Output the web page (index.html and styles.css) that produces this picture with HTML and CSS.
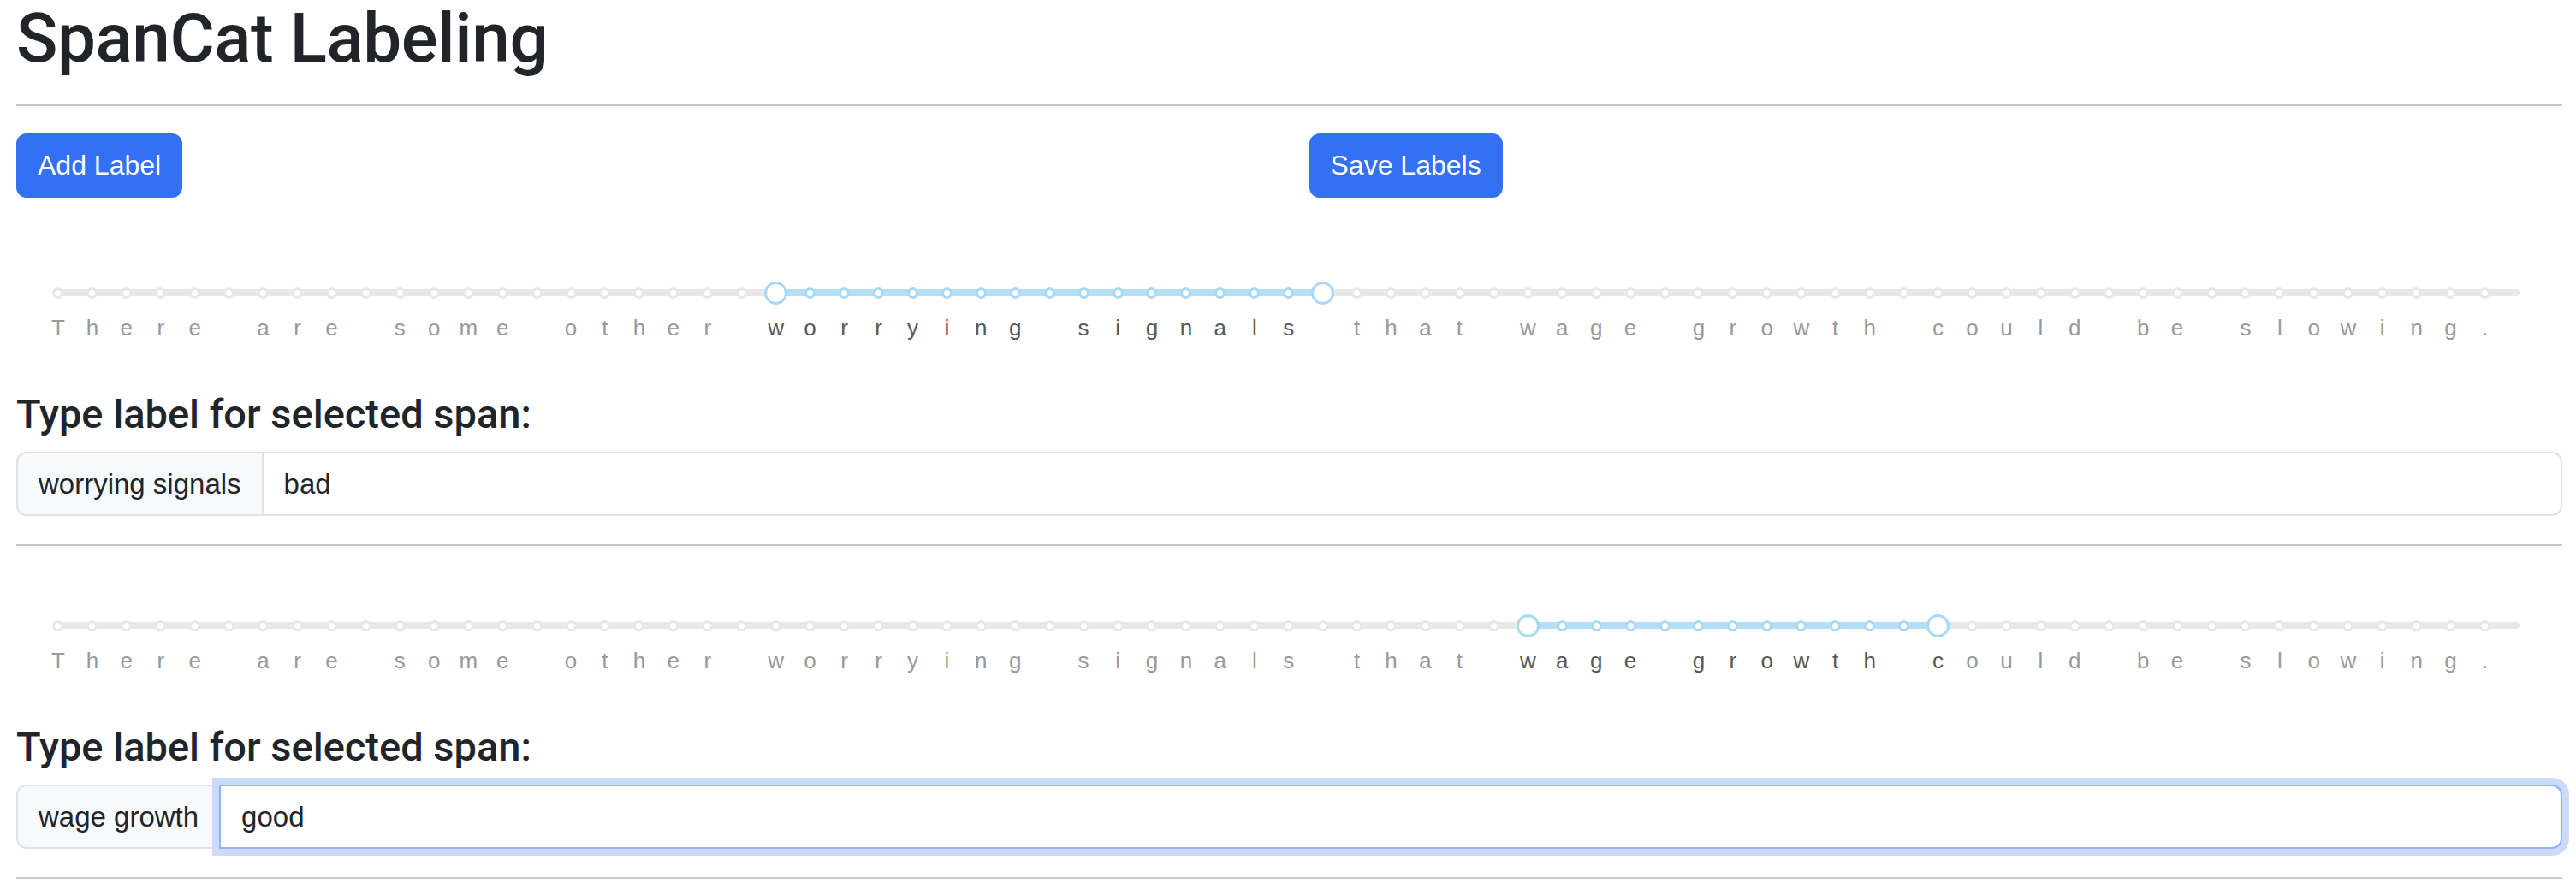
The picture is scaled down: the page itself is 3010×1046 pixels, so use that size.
FILE: index.html
```html
<!DOCTYPE html>
<html lang="en">
<head>
<meta charset="utf-8">
<title>SpanCat Labeling</title>
<link rel="stylesheet" href="styles.css">
</head>
<body>
<div class="page">
  <h1 class="title">SpanCat Labeling</h1>
  <hr class="rule">
  <div class="actions">
    <button class="btn">Add Label</button>
    <button class="btn">Save Labels</button>
  </div>

  <section class="span-block">
    <div class="ticks">
      <b class="seg" style="left:858.7px;width:639px"></b>
      <i></i><i></i><i></i><i></i><i></i><i></i><i></i><i></i><i></i><i></i><i></i><i></i><i></i><i></i><i></i><i></i><i></i><i></i><i></i><i></i><i></i>
      <i class="big"></i>
      <i class="sel"></i><i class="sel"></i><i class="sel"></i><i class="sel"></i><i class="sel"></i><i class="sel"></i><i class="sel"></i><i class="sel"></i><i class="sel"></i><i class="sel"></i><i class="sel"></i><i class="sel"></i><i class="sel"></i><i class="sel"></i><i class="sel"></i>
      <i class="big"></i>
      <i></i><i></i><i></i><i></i><i></i><i></i><i></i><i></i><i></i><i></i><i></i><i></i><i></i><i></i><i></i><i></i><i></i><i></i><i></i><i></i><i></i><i></i><i></i><i></i><i></i><i></i><i></i><i></i><i></i><i></i><i></i><i></i><i></i><i></i>
    </div>
    <div class="chars">
      <span>T</span><span>h</span><span>e</span><span>r</span><span>e</span><span></span><span>a</span><span>r</span><span>e</span><span></span><span>s</span><span>o</span><span>m</span><span>e</span><span></span><span>o</span><span>t</span><span>h</span><span>e</span><span>r</span><span></span>
      <span class="on">w</span><span class="on">o</span><span class="on">r</span><span class="on">r</span><span class="on">y</span><span class="on">i</span><span class="on">n</span><span class="on">g</span><span class="on"></span><span class="on">s</span><span class="on">i</span><span class="on">g</span><span class="on">n</span><span class="on">a</span><span class="on">l</span><span class="on">s</span><span class="on"></span>
      <span>t</span><span>h</span><span>a</span><span>t</span><span></span><span>w</span><span>a</span><span>g</span><span>e</span><span></span><span>g</span><span>r</span><span>o</span><span>w</span><span>t</span><span>h</span><span></span><span>c</span><span>o</span><span>u</span><span>l</span><span>d</span><span></span><span>b</span><span>e</span><span></span><span>s</span><span>l</span><span>o</span><span>w</span><span>i</span><span>n</span><span>g</span><span>.</span>
    </div>
    <h4 class="prompt">Type label for selected span:</h4>
    <div class="input-group">
      <span class="addon">worrying signals</span>
      <input class="field" type="text" value="bad">
    </div>
  </section>
  <hr class="rule rule-section">

  <section class="span-block">
    <div class="ticks">
      <b class="seg" style="left:1737.4px;width:479.3px"></b>
      <i></i><i></i><i></i><i></i><i></i><i></i><i></i><i></i><i></i><i></i><i></i><i></i><i></i><i></i><i></i><i></i><i></i><i></i><i></i><i></i><i></i><i></i><i></i><i></i><i></i><i></i><i></i><i></i><i></i><i></i><i></i><i></i><i></i><i></i><i></i><i></i><i></i><i></i><i></i><i></i><i></i><i></i><i></i>
      <i class="big"></i>
      <i class="sel"></i><i class="sel"></i><i class="sel"></i><i class="sel"></i><i class="sel"></i><i class="sel"></i><i class="sel"></i><i class="sel"></i><i class="sel"></i><i class="sel"></i><i class="sel"></i>
      <i class="big"></i>
      <i></i><i></i><i></i><i></i><i></i><i></i><i></i><i></i><i></i><i></i><i></i><i></i><i></i><i></i><i></i><i></i>
    </div>
    <div class="chars">
      <span>T</span><span>h</span><span>e</span><span>r</span><span>e</span><span></span><span>a</span><span>r</span><span>e</span><span></span><span>s</span><span>o</span><span>m</span><span>e</span><span></span><span>o</span><span>t</span><span>h</span><span>e</span><span>r</span><span></span><span>w</span><span>o</span><span>r</span><span>r</span><span>y</span><span>i</span><span>n</span><span>g</span><span></span><span>s</span><span>i</span><span>g</span><span>n</span><span>a</span><span>l</span><span>s</span><span></span><span>t</span><span>h</span><span>a</span><span>t</span><span></span>
      <span class="on">w</span><span class="on">a</span><span class="on">g</span><span class="on">e</span><span class="on"></span><span class="on">g</span><span class="on">r</span><span class="on">o</span><span class="on">w</span><span class="on">t</span><span class="on">h</span><span class="on"></span><span class="on">c</span>
      <span>o</span><span>u</span><span>l</span><span>d</span><span></span><span>b</span><span>e</span><span></span><span>s</span><span>l</span><span>o</span><span>w</span><span>i</span><span>n</span><span>g</span><span>.</span>
    </div>
    <h4 class="prompt">Type label for selected span:</h4>
    <div class="input-group">
      <span class="addon">wage growth</span>
      <input class="field focused" type="text" value="good">
    </div>
  </section>
  <hr class="rule rule-section">
</div>
</body>
</html>
```

FILE: styles.css
```css
html, body {
  margin: 0;
  padding: 0;
  background: #ffffff;
}

body {
  font-family: "Liberation Sans", Arial, sans-serif;
  color: #212529;
}

.page {
  padding: 0 16px 0 19px;
}

.title {
  font-family: Roboto, "Liberation Sans", Arial, sans-serif;
  font-size: 80px;
  line-height: 90px;
  font-weight: 500;
  letter-spacing: -0.4px;
  margin: 0;
  color: #212529;
}

.rule {
  border: 0;
  border-top: 2px solid #c8c8c8;
  height: 0;
  margin: 32px 0;
}

.rule-section {
  margin-top: 33px;
}

.actions {
  display: grid;
  grid-template-columns: 1fr 1fr;
  column-gap: 46px;
  margin-bottom: 50px;
}

.btn {
  justify-self: start;
  height: 75px;
  padding: 0 25px;
  border: 0;
  border-radius: 12px;
  background: #3470f4;
  color: #ffffff;
  font-family: "Liberation Sans", Arial, sans-serif;
  font-size: 32px;
  line-height: 75px;
}

.span-block {
  padding-top: 47px;
}

.ticks,
.chars {
  display: grid;
  grid-template-columns: repeat(72, 39.94px);
  margin-left: 29px;
}

.ticks {
  position: relative;
  height: 28px;
  align-items: center;
}

.ticks::before {
  content: "";
  position: absolute;
  left: 15px;
  width: 2881px;
  top: 10px;
  height: 8px;
  border-radius: 4px;
  background: #e8e8e8;
}

.ticks .seg {
  position: absolute;
  top: 10px;
  height: 8px;
  background: #b5dff7;
}

.ticks i {
  position: relative;
  z-index: 1;
  justify-self: center;
  box-sizing: border-box;
  width: 13px;
  height: 13px;
  border-radius: 50%;
  background: #ffffff;
  border: 3.5px solid #e8e8e8;
}

.ticks i.sel {
  border-color: #a9d9f6;
}

.ticks i.big {
  width: 27px;
  height: 27px;
  border: 3px solid #a9d9f6;
}

.chars {
  margin-top: 12px;
  height: 30px;
  font-size: 26px;
  line-height: 30px;
  color: #999999;
}

.chars span {
  text-align: center;
}

.chars span.on {
  color: #585858;
}

.prompt {
  font-family: Roboto, "Liberation Sans", Arial, sans-serif;
  font-size: 47px;
  line-height: 56px;
  font-weight: 500;
  letter-spacing: 0;
  margin: 58px 0 16px;
  color: #212529;
}

.input-group {
  display: flex;
  height: 75px;
}

.addon {
  display: flex;
  align-items: center;
  padding: 0 24px;
  background: #f8f9fa;
  border: 2px solid #dee2e6;
  border-radius: 12px 0 0 12px;
  font-size: 33px;
  color: #212529;
  white-space: nowrap;
}

.field {
  flex: 1;
  min-width: 0;
  margin-left: -2px;
  padding: 0 24px;
  border: 2px solid #dee2e6;
  border-radius: 0 12px 12px 0;
  background: #ffffff;
  font-family: "Liberation Sans", Arial, sans-serif;
  font-size: 33px;
  color: #212529;
  outline: none;
}

.field.focused {
  position: relative;
  z-index: 2;
  border-color: #8cb4f6;
  box-shadow: 0 0 0 8px #ccdbfa;
}
```
